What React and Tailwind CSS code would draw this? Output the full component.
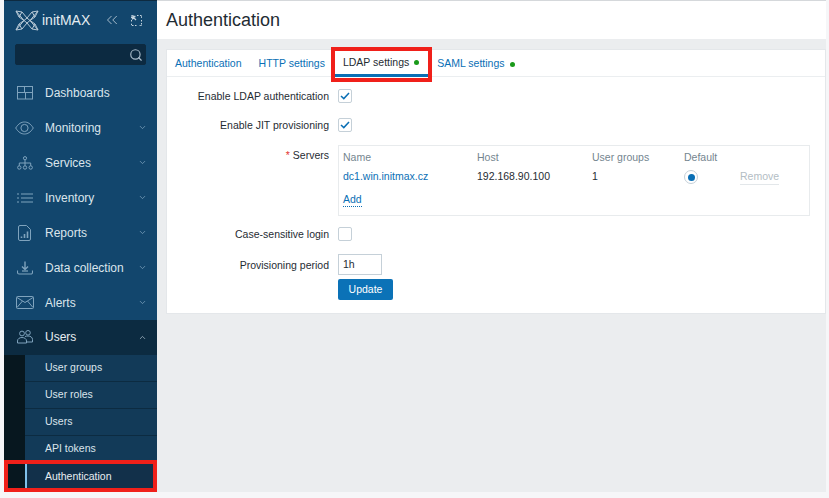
import { ChevronDown, ChevronUp, ChevronsLeft, Search } from "lucide-react";

const ICON = "#7fa3bd";

function IconDashboards() {
  return (
    <svg width="16" height="14" viewBox="0 0 16 14" fill="none" stroke={ICON} strokeWidth="1">
      <rect x="0.5" y="0.5" width="15" height="12.5" />
      <path d="M0.5 6.5H15.5M7.5 0.5V6.5M8.5 6.5V13" />
    </svg>
  );
}

function IconEye() {
  return (
    <svg width="19" height="14" viewBox="0 0 19 14" fill="none" stroke={ICON} strokeWidth="1">
      <path d="M0.7 7C3.5 2.6 6.3 1 9.5 1S15.5 2.6 18.3 7C15.5 11.4 12.7 13 9.5 13S3.5 11.4 0.7 7Z" />
      <circle cx="9.5" cy="7" r="3.6" />
    </svg>
  );
}

function IconServices() {
  return (
    <svg width="16" height="14" viewBox="0 0 16 14" fill="none" stroke={ICON} strokeWidth="1">
      <circle cx="8" cy="2.2" r="1.6" />
      <circle cx="2.3" cy="11.5" r="1.7" />
      <circle cx="8" cy="11.5" r="1.7" />
      <circle cx="13.7" cy="11.5" r="1.7" />
      <path d="M8 4V9.8M2.3 9.8V7H13.7V9.8" />
    </svg>
  );
}

function IconInventory() {
  return (
    <svg width="16" height="10" viewBox="0 0 16 10" fill="none" stroke={ICON} strokeWidth="1.2">
      <path d="M0 1H2M4 1H16M0 5H2M4 5H16M0 9H2M4 9H16" />
    </svg>
  );
}

function IconReports() {
  return (
    <svg width="13" height="16" viewBox="0 0 13 16" fill="none" stroke={ICON} strokeWidth="1">
      <path d="M2 0.5H8.5L12.5 4.5V14A1.5 1.5 0 0 1 11 15.5H2A1.5 1.5 0 0 1 0.5 14V2A1.5 1.5 0 0 1 2 0.5Z" />
      <path d="M3.5 13V11.5M6.5 13V9M9.5 13V6.5" strokeWidth="1.6" />
    </svg>
  );
}

function IconDataCollection() {
  return (
    <svg width="16" height="14" viewBox="0 0 16 14" fill="none" stroke={ICON} strokeWidth="1.1">
      <path d="M8 0.5V8M5 5.5L8 8.5L11 5.5" strokeWidth="1.4" />
      <path d="M5 10H11" strokeWidth="1.2" />
      <path d="M0.5 9.5V11.5A1.5 1.5 0 0 0 2 13H14A1.5 1.5 0 0 0 15.5 11.5V9.5" />
    </svg>
  );
}

function IconAlerts() {
  return (
    <svg width="18" height="13" viewBox="0 0 18 13" fill="none" stroke={ICON} strokeWidth="1">
      <rect x="0.5" y="0.5" width="17" height="12" rx="1" />
      <path d="M1 1.5L9 6.5L17 1.5M1 11.5L6.5 5M17 11.5L11.5 5" />
    </svg>
  );
}

function IconUsers() {
  return (
    <svg width="16" height="14" viewBox="0 0 16 14" fill="none" stroke={ICON} strokeWidth="1">
      <circle cx="5" cy="3.5" r="2.4" />
      <circle cx="11" cy="2.8" r="2.3" />
      <path d="M0.5 13V11C0.5 8.8 2.5 7.5 5 7.5S9.5 8.8 9.5 11V13Z" />
      <path d="M8 6.5C9 6.1 10 6 11 6C13.5 6 15.5 7.3 15.5 9.5V12H10" />
    </svg>
  );
}

function Logo() {
  return (
    <svg width="24" height="21" viewBox="0 0 24 21" fill="none" stroke="#b9cad7" strokeWidth="1">
      <path d="M1 1L7 2L12 8L17 2L23 1L20 7L15 10.5L20 14L23 20L17 19L12 13L7 19L1 20L4 14L9 10.5L4 7Z" />
      <path d="M1 1L9 10.5L1 20M23 1L15 10.5L23 20M7 2L4 7M17 2L20 7M7 19L4 14M17 19L20 14M12 8L9 10.5L12 13L15 10.5Z" />
    </svg>
  );
}

function IconKiosk() {
  return (
    <svg width="11" height="11" viewBox="0 0 11 11" fill="none" stroke="#c3d2dd" strokeWidth="1">
      <path d="M0.5 3V0.5H3M6 0.5H7.5M9 0.5H10.5V3M10.5 5V6.5M10.5 8V10.5H8M5.5 10.5H4M2.5 10.5H0.5V8M0.5 6.5V5" strokeDasharray="1.5 0.8" />
      <path d="M1.5 1.5L5 5M1.5 1.5H4.5M1.5 1.5V4.5" strokeWidth="1.3" />
    </svg>
  );
}

const MENU = [
  { label: "Dashboards", icon: IconDashboards },
  { label: "Monitoring", icon: IconEye, more: true },
  { label: "Services", icon: IconServices, more: true },
  { label: "Inventory", icon: IconInventory, more: true },
  { label: "Reports", icon: IconReports, more: true },
  { label: "Data collection", icon: IconDataCollection, more: true },
  { label: "Alerts", icon: IconAlerts, more: true },
];

const SUBMENU = ["User groups", "User roles", "Users", "API tokens"];

function MenuRow({ item }) {
  const Icon = item.icon;
  return (
    <div className="flex h-[35px] items-center">
      <span className="flex w-[41px] shrink-0 justify-center">
        <Icon />
      </span>
      <span className="text-[12px] text-[#dbe5ec]">{item.label}</span>
      {item.more && <ChevronDown size={9} strokeWidth={2} className="ml-auto mr-[10px] text-[#7fa3bd]" />}
    </div>
  );
}

function Sidebar() {
  return (
    <aside className="relative flex h-[492px] w-[153px] shrink-0 flex-col border-t border-[#0d2a40] bg-[#12466d]">
      <div className="flex h-[38px] items-center pl-[11px] pr-[15px]">
        <Logo />
        <span className="ml-[3px] text-[14px] text-[#e4ecf1]">initMAX</span>
        <ChevronsLeft size={18} strokeWidth={1.1} className="ml-[13px] text-[#c3d2dd]" />
        <span className="ml-auto">
          <IconKiosk />
        </span>
      </div>
      <div className="mx-[11px] mt-[5px] flex h-[21px] items-center justify-end rounded-[2px] border border-[#0d2a40] bg-[#0c2a41] pr-[2px]">
        <Search size={14} strokeWidth={2} className="text-[#a9bccb]" />
      </div>
      <nav className="mt-[10px] flex flex-1 flex-col">
        {MENU.map((item) => (
          <MenuRow key={item.label} item={item} />
        ))}
        <div className="flex h-[35px] items-center bg-[#0c2b41] pb-[1px]">
          <span className="flex w-[41px] shrink-0 justify-center">
            <IconUsers />
          </span>
          <span className="text-[12px] text-[#e8eef2]">Users</span>
          <ChevronUp size={9} strokeWidth={2} className="ml-auto mr-[10px] text-[#a9bccb]" />
        </div>
        <div className="flex flex-1 flex-col bg-[#07171f] pl-[21px]">
          {SUBMENU.map((label) => (
            <div
              key={label}
              className="flex h-[27px] items-center border-b border-[#0c2b41] bg-[#123a58] pl-[20px] text-[10.5px] text-[#dbe5ec]"
            >
              {label}
            </div>
          ))}
          <div className="flex flex-1 items-center border-l-2 border-[#7fc0ea] bg-[#12304a] pb-[2px] pl-[18px] text-[10.5px] text-[#e8eef2]">
            Authentication
          </div>
        </div>
      </nav>
      <div className="pointer-events-none absolute bottom-0 left-0 h-[32px] w-[153px] border-[4px] border-[#f0201a]" />
    </aside>
  );
}

function FormRow({ label, required, className, children }) {
  return (
    <div className={`flex ${className}`}>
      <div
        className={`w-[171px] shrink-0 pr-[9px] text-right text-[10.5px] leading-[14px] text-[#1f2c33] ${
          required ? "pt-[3px]" : ""
        }`}
      >
        {required && <span className="mr-[3px] text-[#e33734]">*</span>}
        {label}
      </div>
      {children}
    </div>
  );
}

function Checkbox({ checked }) {
  return (
    <span className="flex h-[14px] w-[14px] items-center justify-center rounded-[2px] border border-[#c5d0d8] bg-white">
      {checked && (
        <svg width="10" height="8" viewBox="0 0 10 8" fill="none" stroke="#0a6fb5" strokeWidth="1.5">
          <path d="M1 4L3.8 6.6L9 1" />
        </svg>
      )}
    </span>
  );
}

function Tab({ children, active, dot, first }) {
  return (
    <div
      className={`flex h-[27px] items-center gap-[5px] pt-[1px] text-[10.5px] ${first ? "px-[8px]" : "px-[9px]"} ${
        active ? "border-b-[3px] border-[#0a6fb5] text-[#1f2c33]" : "text-[#0a6fb5]"
      }`}
    >
      {children}
      {dot && <span className="h-[5px] w-[5px] rounded-full bg-[#1a9a1a]" />}
    </div>
  );
}

function Card() {
  return (
    <section className="relative ml-[9px] mt-[10px] h-[265px] w-[660px] border border-[#e4e7ea] bg-white">
      <div className="flex h-[27px] border-b border-[#ebeef0]">
        <Tab first>Authentication</Tab>
        <Tab>HTTP settings</Tab>
        <Tab active dot>
          LDAP settings
        </Tab>
        <Tab dot>SAML settings</Tab>
      </div>
      <div className="flex flex-col pt-[12px]">
        <FormRow label="Enable LDAP authentication" className="h-[29px]">
          <Checkbox checked />
        </FormRow>
        <FormRow label="Enable JIT provisioning" className="h-[24px]">
          <Checkbox checked />
        </FormRow>
        <FormRow required label="Servers" className="mt-[3px]">
          <div className="flex h-[71px] w-[472px] flex-col border border-[#e8ebed] pl-[4px] text-[10.5px]">
            <div className="mt-[5px] flex h-[14px] items-center text-[#74858f]">
              <span className="w-[134px]">Name</span>
              <span className="w-[115px]">Host</span>
              <span className="w-[92px]">User groups</span>
              <span>Default</span>
            </div>
            <div className="mt-[5px] flex h-[14px] items-center">
              <span className="w-[134px] text-[#0a6fb5]">dc1.win.initmax.cz</span>
              <span className="w-[115px] text-[#1f2c33]">192.168.90.100</span>
              <span className="w-[92px] text-[#1f2c33]">1</span>
              <span className="flex h-[14px] w-[14px] items-center justify-center rounded-full border border-[#c5d0d8]">
                <span className="h-[7px] w-[7px] rounded-full bg-[#0a6fb5]" />
              </span>
              <span className="ml-[42px] border-b border-[#e3e7ea] text-[#b3bdc4]">Remove</span>
            </div>
            <span className="mt-[9px] self-start border-b border-dotted border-[#0a6fb5] leading-[13px] text-[#0a6fb5]">
              Add
            </span>
          </div>
        </FormRow>
        <FormRow label="Case-sensitive login" className="mt-[11px] h-[31px]">
          <Checkbox />
        </FormRow>
        <FormRow label="Provisioning period" className="h-[21px]">
          <div className="-mt-[4px] flex h-[21px] w-[44px] items-center border border-[#c5d0d8] pl-[4px] text-[10.5px] text-[#1f2c33]">
            1h
          </div>
        </FormRow>
        <div className="flex pl-[171px]">
          <button className="h-[21px] w-[55px] rounded-[2px] bg-[#0b72b7] text-[10.5px] text-white">Update</button>
        </div>
      </div>
      <div className="pointer-events-none absolute left-[164px] -top-[3px] h-[35px] w-[101px] border-[4px] border-[#f0201a]" />
    </section>
  );
}

export default function App() {
  return (
    <div
      className="flex h-[498px] w-[829px] overflow-hidden bg-[#f6f6f8] pl-[4px] pr-[3px]"
      style={{ fontFamily: '"Liberation Sans", Arial, sans-serif' }}
    >
      <Sidebar />
      <main className="flex h-[492px] flex-1 flex-col bg-[#ebedef]">
        <header className="flex h-[39px] items-center border-t border-[#d5d8db] bg-white pl-[9px] text-[18px] text-[#1f2c33]">
          Authentication
        </header>
        <Card />
      </main>
    </div>
  );
}
